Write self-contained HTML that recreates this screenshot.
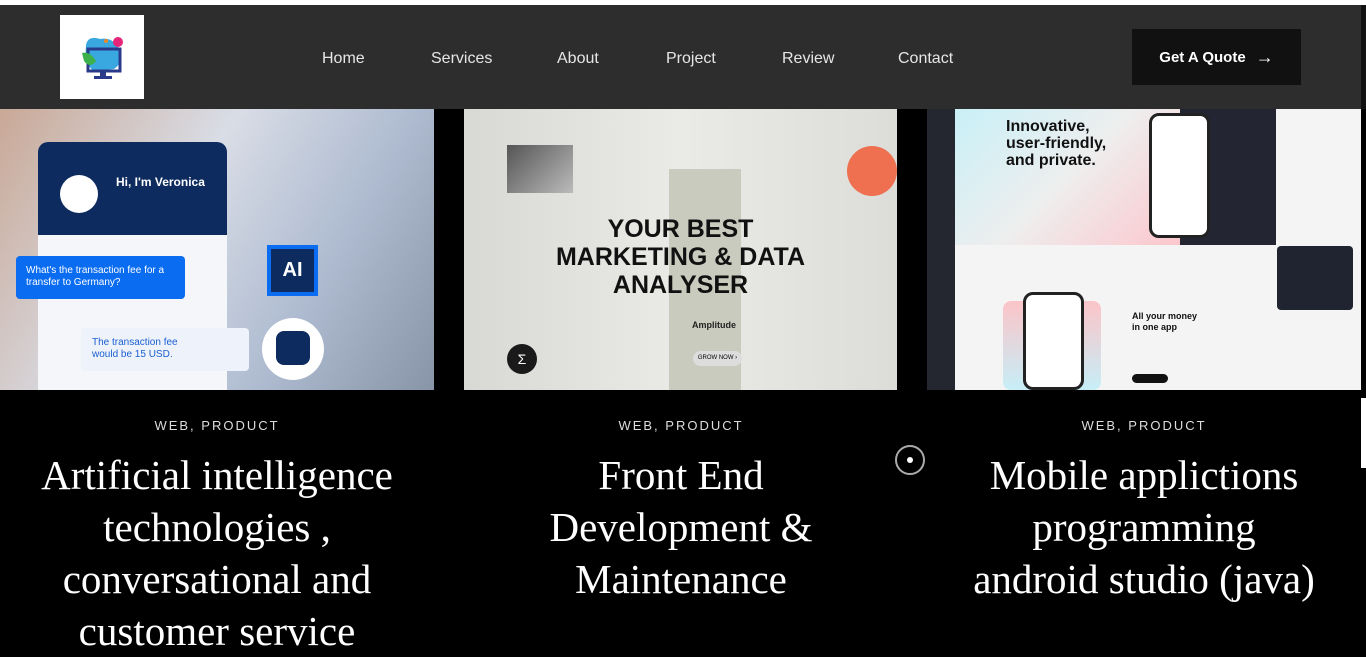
<!DOCTYPE html>
<html><head><meta charset="utf-8"><style>
*{margin:0;padding:0;box-sizing:border-box}
body{width:1366px;height:647px;overflow:hidden;background:#000;font-family:"Liberation Sans",sans-serif;position:relative}
.top{position:absolute;left:0;top:0;width:1366px;height:5px;background:#fff}
.hdr{position:absolute;left:0;top:5px;width:1361px;height:104px;background:#2d2d2d}
.rs{position:absolute;left:1361px;top:5px;width:5px;height:104px;background:#111}
.logo{position:absolute;left:60px;top:15px;width:84px;height:84px;background:#fff}
.nav a{position:absolute;top:50px;color:#e6e6e6;font-size:16px;text-decoration:none}
.btn{position:absolute;left:1132px;top:29px;width:169px;height:56px;background:#111;color:#fff;font-weight:bold;font-size:15px;display:flex;align-items:center;justify-content:center;gap:10px}
.img{position:absolute;top:109px;height:281px;overflow:hidden}
.cat{position:absolute;top:418px;width:434px;text-align:center;color:#ddd;font-size:13px;letter-spacing:2px}
.ttl{position:absolute;top:449px;width:434px;text-align:center;color:#fff;font-family:"Liberation Serif",serif;font-size:41px;line-height:52px;white-space:nowrap}
.t{position:absolute;white-space:nowrap}
</style></head><body>
<div class="top"></div><div class="hdr"></div><div class="rs"></div>
<div class="logo"><svg width="84" height="84" viewBox="0 0 84 84">
<path d="M26 30 Q28 20 40 24 Q52 22 58 32 Q66 46 54 54 L34 56 Q24 50 26 30Z" fill="#3aa8e0"/>
<circle cx="58" cy="27" r="5" fill="#e6257a"/><circle cx="46" cy="26" r="2" fill="#e88a2a"/>
<rect x="28" y="34" width="32" height="22" fill="none" stroke="#2a3a8a" stroke-width="3"/>
<path d="M22 38 Q30 36 36 46 Q30 54 24 46Z" fill="#3cb04a"/>
<rect x="40" y="56" width="6" height="5" fill="#2a3a8a"/><rect x="34" y="61" width="18" height="3" fill="#2a3a8a"/>
</svg></div>
<div class="nav"><a style="left:322px">Home</a><a style="left:431px">Services</a><a style="left:557px">About</a><a style="left:666px">Project</a><a style="left:782px">Review</a><a style="left:898px">Contact</a></div>
<div class="btn">Get A Quote <span style="font-size:18px;font-weight:normal">→</span></div>

<div class="img" style="left:0;width:434px;background:linear-gradient(120deg,#c9a896 0%,#d9dde6 40%,#aebbd0 70%,#8895a8 100%)">
 <div class="t" style="left:38px;top:33px;width:189px;height:248px;background:#f4f6fa;border-radius:10px 10px 0 0"></div>
 <div class="t" style="left:38px;top:33px;width:189px;height:93px;background:#0d2b5e;border-radius:10px 10px 0 0"></div>
 <div class="t" style="left:60px;top:66px;width:38px;height:38px;border-radius:50%;background:#fff"></div>
 <div class="t" style="left:116px;top:66px;color:#fff;font-weight:bold;font-size:12px">Hi, I'm Veronica</div>
 <div class="t" style="left:16px;top:147px;width:169px;height:43px;background:#0a6cf0;border-radius:4px;color:#fff;font-size:10px;padding:9px 10px;line-height:12px;white-space:normal">What's the transaction fee for a transfer to Germany?</div>
 <div class="t" style="left:81px;top:219px;width:168px;height:43px;background:#eef2fb;border-radius:4px;color:#1a5fd0;font-size:10px;padding:9px 11px;line-height:12px">The transaction fee<br>would be 15 USD.</div>
 <div class="t" style="left:267px;top:136px;width:51px;height:51px;background:#0d2b5e;border:4px solid #0a6cf0;color:#fff;font-weight:bold;font-size:20px;text-align:center;line-height:43px">AI</div>
 <div class="t" style="left:262px;top:209px;width:62px;height:62px;border-radius:50%;background:#fff"></div>
 <div class="t" style="left:276px;top:222px;width:34px;height:34px;border-radius:8px;background:#0d2b5e"></div>
</div>

<div class="img" style="left:464px;width:433px;background:linear-gradient(90deg,#d8d8d4,#eaeae6 50%,#dcdcd8)">
 <div class="t" style="left:205px;top:60px;width:72px;height:221px;background:#c9cbbf"></div>
 <div class="t" style="left:43px;top:36px;width:66px;height:48px;background:linear-gradient(135deg,#555,#bbb)"></div>
 <div class="t" style="left:383px;top:37px;width:50px;height:50px;border-radius:50%;background:#ee7050"></div>
 <div class="t" style="left:0;top:106px;width:433px;text-align:center;color:#111;font-weight:bold;font-size:25px;line-height:28px;white-space:normal">YOUR BEST<br>MARKETING &amp; DATA<br>ANALYSER</div>
 <div class="t" style="left:228px;top:211px;font-size:9px;font-weight:bold;color:#222">Amplitude</div>
 <div class="t" style="left:43px;top:235px;width:30px;height:30px;border-radius:50%;background:#1a1a1a;color:#fff;text-align:center;line-height:30px;font-size:14px">Σ</div>
 <div class="t" style="left:229px;top:242px;width:49px;height:15px;border-radius:8px;background:#ddd;font-size:6px;text-align:center;line-height:15px">GROW NOW ›</div>
</div>

<div class="img" style="left:927px;width:434px;background:#242630">
 <div class="t" style="left:28px;top:0;width:406px;height:281px;background:#f4f4f4"></div>
 <div class="t" style="left:28px;top:0;width:225px;height:136px;background:linear-gradient(135deg,#c8f0f7,#eee 50%,#fcc6cc)"></div>
 <div class="t" style="left:253px;top:0;width:96px;height:136px;background:#232632"></div>
 <div class="t" style="left:79px;top:9px;color:#111;font-weight:bold;font-size:16px;line-height:17px">Innovative,<br>user-friendly,<br>and private.</div>
 <div class="t" style="left:222px;top:4px;width:61px;height:125px;border:3px solid #222;border-radius:10px;background:#fff"></div>
 <div class="t" style="left:350px;top:137px;width:76px;height:64px;background:#202430;border-radius:4px"></div>
 <div class="t" style="left:76px;top:192px;width:98px;height:89px;background:linear-gradient(#fbc4c8,#c7eef7);border-radius:8px"></div>
 <div class="t" style="left:96px;top:183px;width:61px;height:98px;border:3px solid #222;border-radius:10px;background:#fff"></div>
 <div class="t" style="left:205px;top:202px;color:#111;font-weight:bold;font-size:9px;line-height:11px">All your money<br>in one app</div>
 <div class="t" style="left:205px;top:265px;width:36px;height:9px;background:#111;border-radius:5px"></div>
</div>

<div class="cat" style="left:0">WEB, PRODUCT</div>
<div class="cat" style="left:464px">WEB, PRODUCT</div>
<div class="cat" style="left:927px">WEB, PRODUCT</div>
<div class="ttl" style="left:0">Artificial intelligence<br>technologies ,<br>conversational and<br>customer service</div>
<div class="ttl" style="left:464px">Front End<br>Development &amp;<br>Maintenance</div>
<div class="ttl" style="left:927px">Mobile applictions<br>programming<br>android studio (java)</div>
<div class="t" style="left:895px;top:445px;width:30px;height:30px;border:2px solid #aaa;border-radius:50%"></div>
<div class="t" style="left:907px;top:457px;width:6px;height:6px;background:#fff;border-radius:50%"></div>
<div class="t" style="left:1361px;top:398px;width:5px;height:70px;background:#fff"></div>
</body></html>
